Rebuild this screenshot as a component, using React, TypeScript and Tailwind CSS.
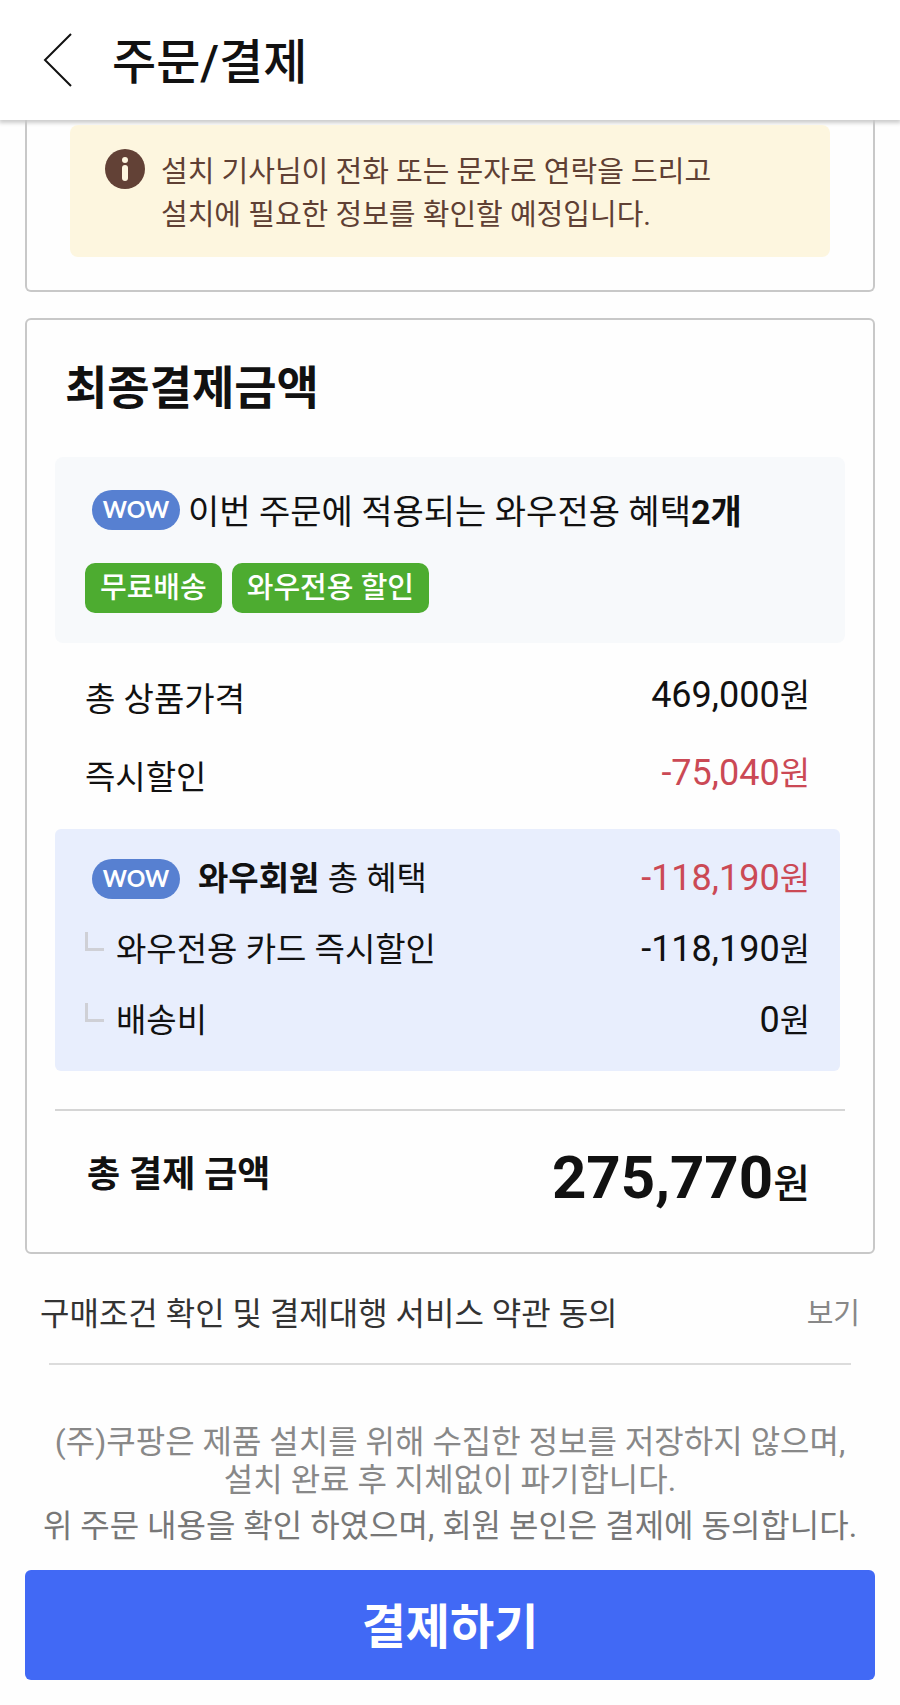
import type { ReactNode } from "react";

function WowBadge() {
  return (
    <svg className="h-10 w-[88px] shrink-0" viewBox="0 0 88 40" role="img" aria-label="WOW">
      <rect width="88" height="40" rx="20" fill="#5780d1" />
      <text x="44" y="28" textAnchor="middle" fill="#fff" fontFamily="Lato, sans-serif" fontSize="23" fontWeight="700">
        WOW
      </text>
    </svg>
  );
}

function Branch() {
  return <span className="-mt-4 mr-3 h-[19px] w-[19px] shrink-0 border-b-3 border-l-3 border-[#cfd0d6]" />;
}

function Amount({ value, red }: { value: string; red?: boolean }) {
  return (
    <dd className={red ? "text-[#cb4955]" : undefined}>
      <span className="text-4xl leading-none">{value}</span>원
    </dd>
  );
}

function PriceRow({ label, children }: { label: ReactNode; children: ReactNode }) {
  return (
    <div className="flex items-start justify-between">
      <dt className="pt-1">{label}</dt>
      {children}
    </div>
  );
}

function BenefitRow({ label, children }: { label: ReactNode; children: ReactNode }) {
  return (
    <div className="flex h-[71px] items-center justify-between">
      <dt className="flex items-center">{label}</dt>
      {children}
    </div>
  );
}

export default function App() {
  return (
    <div className="min-h-screen bg-[#fefefe] font-[Roboto,'Noto_Sans_CJK_KR',sans-serif] text-[#111]">
      {/* Header */}
      <header className="flex h-[120px] items-center bg-white pl-[42px] shadow-[0_2px_4px_1px_rgba(0,0,0,0.2)]">
        <button type="button" aria-label="뒤로" className="mr-10">
          <svg className="h-[54px] w-[30px]" viewBox="0 0 30 54" fill="none" stroke="currentColor" strokeWidth="2">
            <path d="M29 1 3 27l26 26" />
          </svg>
        </button>
        <h1 className="pt-1.5 text-5xl font-medium">주문/결제</h1>
      </header>

      <main className="px-[25px] pb-[25px]">
        {/* Install notice */}
        <section className="rounded-b-md border-2 border-t-0 border-[#c8c8c8] px-[43px] pt-[5px] pb-[33px]">
          <div className="flex rounded-lg bg-[#fdf6df] px-[35px] pt-6 pb-5 text-[#5f4034]">
            <svg className="mr-4 size-10 shrink-0" viewBox="0 0 40 40" aria-hidden="true">
              <circle cx="20" cy="20" r="20" fill="#624136" />
              <circle cx="20" cy="11" r="3" fill="#fdf6df" />
              <rect x="17" y="16" width="6" height="16" rx="3" fill="#fdf6df" />
            </svg>
            <p className="pt-0.5 text-[29px] leading-[43px]">
              설치 기사님이 전화 또는 문자로 연락을 드리고
              <br />
              설치에 필요한 정보를 확인할 예정입니다.
            </p>
          </div>
        </section>

        {/* Final amount */}
        <section className="mt-[26px] rounded-md border-2 border-[#c8c8c8] px-7 pb-[34px]">
          <h2 className="px-[10px] pt-[39px] pb-10 text-[46px] leading-[58px] font-bold">최종결제금액</h2>

          <div className="rounded-lg bg-[#f7f9fb] px-[30px] py-[30px]">
            <p className="flex items-center pl-[7px] text-[34px] leading-[50px]">
              <WowBadge />
              <span className="-mb-1 ml-2">
                이번 주문에 적용되는 와우전용 혜택<b>2개</b>
              </span>
            </p>
            <ul className="mt-[30px] flex gap-[10px] text-[29px] leading-[50px] font-medium text-white">
              <li className="rounded-[10px] bg-[#4dac30] px-[15px]">무료배송</li>
              <li className="rounded-[10px] bg-[#4dac30] px-[15px]">와우전용 할인</li>
            </ul>
          </div>

          <dl className="text-[33px] leading-[50px]">
            <div className="flex flex-col gap-6 pt-7 pr-[35px] pb-[26px] pl-[30px]">
              <PriceRow label="총 상품가격">
                <Amount value="469,000" />
              </PriceRow>
              <PriceRow label="즉시할인">
                <Amount value="-75,040" red />
              </PriceRow>
            </div>

            <div className="mr-[5px] rounded-md bg-[#e8eefd] pt-[14px] pr-[30px] pb-[15px] pl-[30px]">
              <BenefitRow
                label={
                  <span className="flex items-center pl-[7px]">
                    <WowBadge />
                    <span className="ml-[18px]">
                      <b>와우회원</b> 총 혜택
                    </span>
                  </span>
                }
              >
                <Amount value="-118,190" red />
              </BenefitRow>
              <BenefitRow label={<><Branch />와우전용 카드 즉시할인</>}>
                <Amount value="-118,190" />
              </BenefitRow>
              <BenefitRow label={<><Branch />배송비</>}>
                <Amount value="0" />
              </BenefitRow>
            </div>

            <div className="mt-[38px] flex items-start justify-between border-t-2 border-[#d5d5d5] pt-[33px] pr-[35px] pl-8 font-medium">
              <dt className="pt-1 text-4xl leading-[54px] font-bold">총 결제 금액</dt>
              <dd className="pt-1 text-[40px] leading-[66px]">
                <b className="text-6xl leading-none">275,770</b>원
              </dd>
            </div>
          </dl>
        </section>

        {/* Terms */}
        <div className="flex items-center justify-between px-[15px] pt-[35px] pb-6 text-[#333]">
          <p className="text-[32px] leading-[50px]">구매조건 확인 및 결제대행 서비스 약관 동의</p>
          <a href="#terms" className="text-[29px] leading-[50px] text-[#888]">보기</a>
        </div>
        <hr className="mx-6 border-t-2 border-[#dcdcdc]" />

        <div className="pt-[58px] text-center text-[32px] leading-[38px] text-[#888]">
          <p>
            (주)쿠팡은 제품 설치를 위해 수집한 정보를 저장하지 않으며,
            <br />
            설치 완료 후 지체없이 파기합니다.
          </p>
          <p className="mt-2 text-[#777]">위 주문 내용을 확인 하였으며, 회원 본인은 결제에 동의합니다.</p>
        </div>

        <button type="button" className="mt-[25px] h-[110px] w-full rounded-md bg-[#4169f5] pt-1.5 text-5xl font-bold text-white">
          결제하기
        </button>
      </main>
    </div>
  );
}
